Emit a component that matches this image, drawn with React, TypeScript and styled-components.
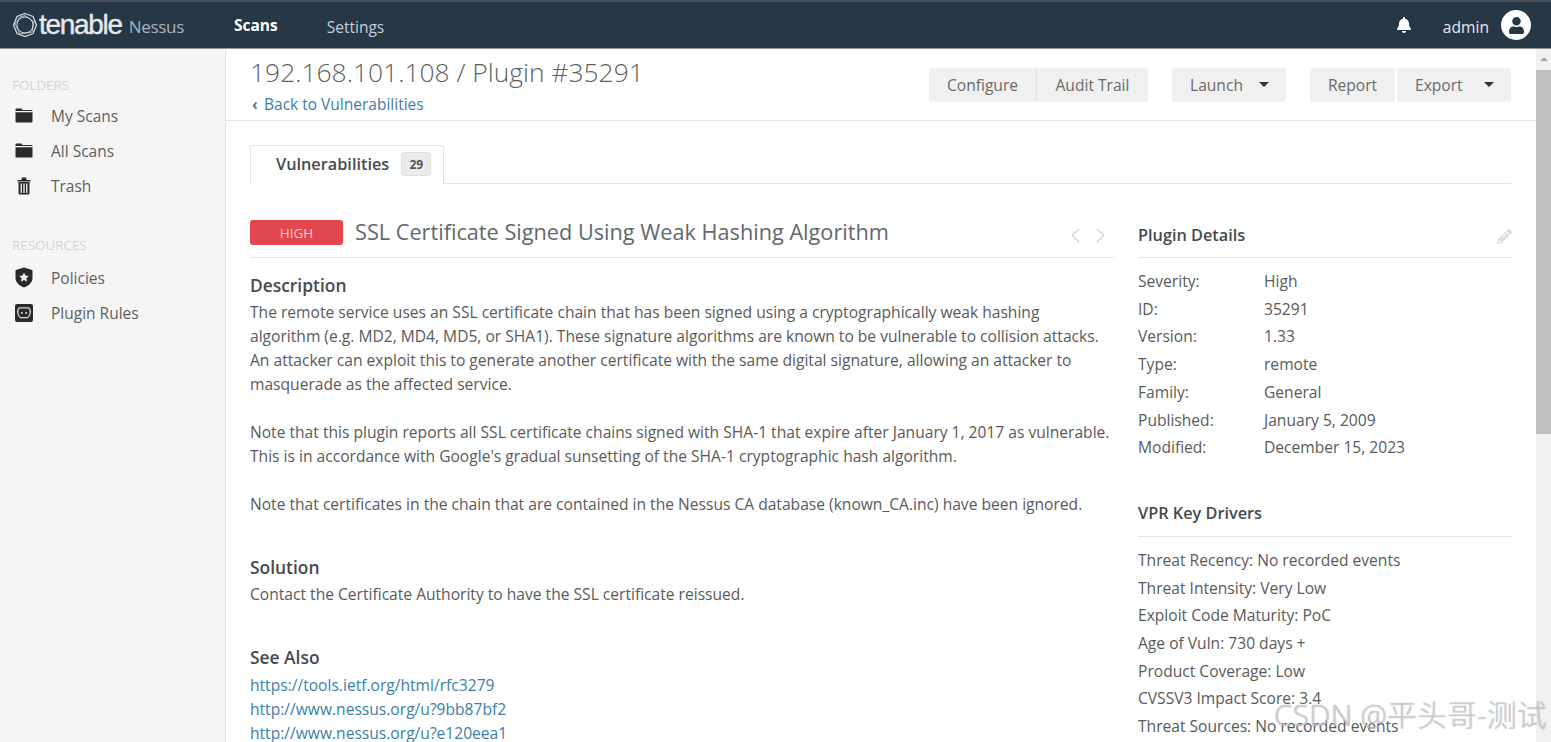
import styled, { createGlobalStyle } from 'styled-components';
import { FaBell, FaPencilAlt, FaUser } from 'react-icons/fa';
import { ChevronLeft, ChevronRight } from 'lucide-react';

const GlobalStyle = createGlobalStyle`
  html, body {
    margin: 0;
    height: 100%;
    overflow: hidden;
    background: #fff;
    font-family: "Open Sans", "Noto Sans", sans-serif;
    color: #575757;
  }
  * { box-sizing: border-box; }
`;

const details = [
  ['Severity:', 'High'],
  ['ID:', '35291'],
  ['Version:', '1.33'],
  ['Type:', 'remote'],
  ['Family:', 'General'],
  ['Published:', 'January 5, 2009'],
  ['Modified:', 'December 15, 2023'],
];

const drivers = [
  'Threat Recency: No recorded events',
  'Threat Intensity: Very Low',
  'Exploit Code Maturity: PoC',
  'Age of Vuln: 730 days +',
  'Product Coverage: Low',
  'CVSSV3 Impact Score: 3.4',
  'Threat Sources: No recorded events',
];

const FolderIcon = () => (
  <svg width="18" height="15" viewBox="0 0 18 15">
    <path d="M0.5 3 V1.5 C0.5 0.9 0.9 0.5 1.5 0.5 H6 C6.6 0.5 7 0.9 7.2 1.5 L7.5 2 H16.5 C17.1 2 17.5 2.4 17.5 3 Z" fill="#2b2b2e" />
    <path d="M0.5 4.2 H17.5 V13.5 C17.5 14.1 17.1 14.5 16.5 14.5 H1.5 C0.9 14.5 0.5 14.1 0.5 13.5 Z" fill="#2b2b2e" />
  </svg>
);

const TrashIcon = () => (
  <svg width="14" height="18" viewBox="0 0 14 18">
    <path d="M0.5 3 H4.5 V1.6 C4.5 1 5 0.5 5.6 0.5 H8.4 C9 0.5 9.5 1 9.5 1.6 V3 H13.5 V4.4 H0.5 Z" fill="#2b2b2e" />
    <path d="M1.5 5 H12.5 V16.3 C12.5 17 12 17.5 11.3 17.5 H2.7 C2 17.5 1.5 17 1.5 16.3 Z" fill="#2b2b2e" />
    <rect x="3.6" y="6.5" width="1.3" height="9.5" fill="#f5f5f5" />
    <rect x="6.35" y="6.5" width="1.3" height="9.5" fill="#f5f5f5" />
    <rect x="9.1" y="6.5" width="1.3" height="9.5" fill="#f5f5f5" />
  </svg>
);

const App = () => {
  return (
    <>
      <GlobalStyle />
      <Page>
        <TopBar>
          <Brand>
            <svg width="26" height="26" viewBox="0 0 26 26" fill="none" stroke="#d5dadd" strokeWidth="1.3">
              <path d="M13 1.5 L21 4.5 L24.5 13 L21 21.5 L13 24.5 L5 21.5 L1.5 13 L5 4.5 Z" />
              <path d="M13 3.5 L22 10 L20 20 L8 22 L3 12 L8 5 Z" strokeWidth="0.8" />
              <circle cx="13" cy="13" r="8" strokeWidth="1" />
            </svg>
            <BrandName>tenable</BrandName>
            <BrandProduct>Nessus</BrandProduct>
          </Brand>
          <TopLink $active>Scans</TopLink>
          <TopLink>Settings</TopLink>
          <TopRight>
            <FaBell size={16} color="#fff" />
            <AdminName>admin</AdminName>
            <AvatarCircle>
              <FaUser size={17} color="#263746" />
            </AvatarCircle>
          </TopRight>
        </TopBar>

        <Body>
          <Sidebar>
            <SideHeading>FOLDERS</SideHeading>
            <SideItem><SideIcon><FolderIcon /></SideIcon>My Scans</SideItem>
            <SideItem><SideIcon><FolderIcon /></SideIcon>All Scans</SideItem>
            <SideItem><SideIcon $nudge={2}><TrashIcon /></SideIcon>Trash</SideItem>
            <SideHeading $second>RESOURCES</SideHeading>
            <SideItem>
              <SideIcon>
                <svg width="18" height="21" viewBox="0 0 18 21">
                  <path d="M9 0.5 L17 3 C17.4 3.2 17.5 3.4 17.5 3.8 V11 C17.5 15.5 13.5 19 9 20.5 C4.5 19 0.5 15.5 0.5 11 V3.8 C0.5 3.4 0.6 3.2 1 3 Z" fill="#2b2b2e" />
                  <path d="M9 5.5 L10.5 8.6 L13.8 9 L11.4 11.3 L12 14.6 L9 13 L6 14.6 L6.6 11.3 L4.2 9 L7.5 8.6 Z" fill="#f5f5f5" />
                </svg>
              </SideIcon>
              Policies
            </SideItem>
            <SideItem>
              <SideIcon>
                <svg width="18" height="18" viewBox="0 0 18 18">
                  <rect x="0" y="0" width="18" height="18" rx="2" fill="#2b2b2e" />
                  <path d="M4.5 3.8 H13.5 C15 5 15.6 7 15.2 9 C14.9 11 13.8 12.8 12.5 13.6 H5.5 C4.2 12.8 3.1 11 2.8 9 C2.4 7 3 5 4.5 3.8 Z" fill="none" stroke="#cfcfcf" strokeWidth="1.3" />
                  <circle cx="6.8" cy="9" r="1.1" fill="#cfcfcf" />
                  <circle cx="11.2" cy="9" r="1.1" fill="#cfcfcf" />
                </svg>
              </SideIcon>
              Plugin Rules
            </SideItem>
          </Sidebar>

          <Main>
            <TitleBar>
              <TitleBlock>
                <PageTitle>192.168.101.108 / Plugin #35291</PageTitle>
                <BackLink><BackChevron>‹</BackChevron>Back to Vulnerabilities</BackLink>
              </TitleBlock>
              <Actions>
                <ButtonGroup>
                  <ActionButton $width={108} $divider>Configure</ActionButton>
                  <ActionButton $width={111}>Audit Trail</ActionButton>
                </ButtonGroup>
                <ActionButton $width={114} $caret>Launch<Caret /></ActionButton>
                <ButtonGroup>
                  <ActionButton $width={85}>Report</ActionButton>
                  <ActionButton $width={114} $caret $gapLeft>Export<Caret /></ActionButton>
                </ButtonGroup>
              </Actions>
            </TitleBar>

            <Content>
              <TabRow>
                <Tab>
                  Vulnerabilities
                  <TabCount>29</TabCount>
                </Tab>
              </TabRow>

              <Columns>
                <LeftColumn>
                  <PluginHeader>
                    <SeverityBadge>HIGH</SeverityBadge>
                    <PluginTitle>SSL Certificate Signed Using Weak Hashing Algorithm</PluginTitle>
                    <Pager>
                      <ChevronLeft size={25} strokeWidth={1.3} />
                      <ChevronRight size={25} strokeWidth={1.3} />
                    </Pager>
                  </PluginHeader>

                  <SectionTitle>Description</SectionTitle>
                  <Paragraph>
                    The remote service uses an SSL certificate chain that has been signed using a cryptographically weak hashing<br />
                    algorithm (e.g. MD2, MD4, MD5, or SHA1). These signature algorithms are known to be vulnerable to collision attacks.<br />
                    An attacker can exploit this to generate another certificate with the same digital signature, allowing an attacker to<br />
                    masquerade as the affected service.
                  </Paragraph>
                  <Paragraph>
                    Note that this plugin reports all SSL certificate chains signed with SHA-1 that expire after January 1, 2017 as vulnerable.<br />
                    This is in accordance with Google's gradual sunsetting of the SHA-1 cryptographic hash algorithm.
                  </Paragraph>
                  <Paragraph>
                    Note that certificates in the chain that are contained in the Nessus CA database (known_CA.inc) have been ignored.
                  </Paragraph>

                  <SectionTitle $spaced>Solution</SectionTitle>
                  <Paragraph>Contact the Certificate Authority to have the SSL certificate reissued.</Paragraph>

                  <SectionTitle $spaced>See Also</SectionTitle>
                  <LinkList>
                    <LinkLine>https://tools.ietf.org/html/rfc3279</LinkLine>
                    <LinkLine>http://www.nessus.org/u?9bb87bf2</LinkLine>
                    <LinkLine>http://www.nessus.org/u?e120eea1</LinkLine>
                  </LinkList>
                </LeftColumn>

                <RightColumn>
                  <PanelHeader>
                    Plugin Details
                    <PencilSlot><FaPencilAlt size={15} color="#dcdcdc" /></PencilSlot>
                  </PanelHeader>
                  <DetailList>
                    {details.map(([label, value]) => (
                      <DetailRow key={label}>
                        <DetailLabel>{label}</DetailLabel>
                        <span>{value}</span>
                      </DetailRow>
                    ))}
                  </DetailList>
                  <PanelHeader $spaced>VPR Key Drivers</PanelHeader>
                  <DetailList>
                    {drivers.map((line) => (
                      <DetailRow key={line}>{line}</DetailRow>
                    ))}
                  </DetailList>
                </RightColumn>
              </Columns>
            </Content>
          </Main>

          <Scrollbar>
            <ScrollArrow />
            <ScrollThumb />
          </Scrollbar>
        </Body>
        <Watermark>CSDN @平头哥-测试</Watermark>
      </Page>
    </>
  );
};

export default App;

const Page = styled.div`
  position: relative;
  width: 1551px;
  height: 742px;
  overflow: hidden;
  display: flex;
  flex-direction: column;
`;

const TopBar = styled.header`
  height: 49px;
  flex: none;
  display: flex;
  align-items: center;
  background: #263746;
  border-top: 2px solid #4a4f54;
  border-bottom: 1px solid #8b959c;
  color: #fff;
  padding-left: 12px;
`;

const Brand = styled.div`
  width: 222px;
  display: flex;
  align-items: center;
  flex: none;
`;

const BrandName = styled.span`
  font-family: "Liberation Sans", Arial, sans-serif;
  font-size: 28px;
  letter-spacing: -1.3px;
  color: #e6e9eb;
  -webkit-text-stroke: 0.4px #e6e9eb;
  margin-left: 1px;
`;

const BrandProduct = styled.span`
  font-size: 17px;
  letter-spacing: -0.3px;
  color: #aab3ba;
  margin-left: 7px;
  margin-top: 3px;
`;

const TopLink = styled.a<{ $active?: boolean }>`
  font-size: 15.5px;
  font-weight: ${(props) => (props.$active ? 700 : 400)};
  color: ${(props) => (props.$active ? '#fff' : '#c8ced3')};
  margin-right: 49px;
  margin-top: ${(props) => (props.$active ? '0' : '3px')};
`;

const TopRight = styled.div`
  margin-left: auto;
  display: flex;
  align-items: center;
  padding-right: 20px;
`;

const AdminName = styled.span`
  font-size: 15.6px;
  color: #e6e9eb;
  margin: 3px 12px 0 31px;
`;

const AvatarCircle = styled.span`
  width: 30px;
  height: 30px;
  border-radius: 50%;
  background: #fff;
  display: flex;
  align-items: center;
  justify-content: center;
`;

const Body = styled.div`
  flex: 1;
  min-height: 0;
  display: flex;
`;

const Sidebar = styled.nav`
  width: 226px;
  flex: none;
  background: #f5f5f5;
  border-right: 1px solid #e4e4e4;
  padding-top: 28px;
`;

const SideHeading = styled.div<{ $second?: boolean }>`
  font-size: 13.4px;
  line-height: 16px;
  color: #d4d4d4;
  padding-left: 12px;
  margin-top: ${(props) => (props.$second ? '34px' : '0')};
  margin-bottom: ${(props) => (props.$second ? '7px' : '5px')};
`;

const SideItem = styled.div`
  height: 35px;
  display: flex;
  align-items: center;
  font-size: 15.5px;
  color: #5f5f5f;
`;

const SideIcon = styled.span<{ $nudge?: number }>`
  width: 51px;
  padding-left: ${(props) => 15 + (props.$nudge || 0)}px;
  flex: none;
  display: flex;
  align-items: center;
`;

const Main = styled.main`
  flex: 1;
  min-width: 0;
  display: flex;
  flex-direction: column;
`;

const TitleBar = styled.div`
  height: 72px;
  flex: none;
  display: flex;
  justify-content: space-between;
  padding: 6px 25px 0 24px;
  border-bottom: 1px solid #e6e6e6;
`;

const TitleBlock = styled.div`
  display: flex;
  flex-direction: column;
`;

const PageTitle = styled.h1`
  margin: 0;
  font-size: 26.4px;
  line-height: 34px;
  font-weight: 300;
  color: #5f5f5f;
`;

const BackLink = styled.a`
  display: flex;
  font-size: 15.5px;
  line-height: 24px;
  color: #3d7ea6;
  margin-top: 3px;
`;

const BackChevron = styled.span`
  width: 14px;
  padding-left: 2px;
  font-weight: 700;
`;

const Actions = styled.div`
  display: flex;
  gap: 24px;
  padding-top: 13px;
  align-items: flex-start;
`;

const ButtonGroup = styled.div`
  display: flex;
`;

const ActionButton = styled.div<{ $width: number; $divider?: boolean; $caret?: boolean; $gapLeft?: boolean }>`
  width: ${(props) => props.$width}px;
  height: 34px;
  display: flex;
  align-items: center;
  justify-content: ${(props) => (props.$caret ? 'space-between' : 'center')};
  padding: ${(props) => (props.$caret ? '0 17px 0 18px' : '0')};
  background: #f0f0f0;
  border-radius: 3px;
  font-size: 15.6px;
  color: #6b6b6b;
  border-right: ${(props) => (props.$divider ? '1px solid #dedede' : 'none')};
  margin-left: ${(props) => (props.$gapLeft ? '2px' : '0')};
`;

const Caret = styled.span`
  width: 0;
  height: 0;
  border-left: 5px solid transparent;
  border-right: 5px solid transparent;
  border-top: 5px solid #333;
  margin-bottom: 2px;
`;

const Content = styled.div`
  padding: 24px 25px 0 24px;
`;

const TabRow = styled.div`
  height: 39px;
  display: flex;
  border-bottom: 1px solid #e4e4e4;
`;

const Tab = styled.div`
  width: 194px;
  height: 39px;
  display: flex;
  align-items: center;
  padding: 0 0 2px 25px;
  background: #fff;
  border: 1px solid #e4e4e4;
  border-bottom: none;
  border-radius: 3px 3px 0 0;
  font-size: 16.3px;
  font-weight: 600;
  color: #454a4f;
`;

const TabCount = styled.span`
  width: 30px;
  height: 24px;
  margin-left: 12px;
  display: flex;
  align-items: center;
  justify-content: center;
  background: #ececec;
  border: 1px solid #e0e0e0;
  border-radius: 3px;
  font-size: 12px;
  font-weight: 700;
  color: #555;
`;

const Columns = styled.div`
  display: flex;
  justify-content: space-between;
  padding-top: 26px;
`;

const LeftColumn = styled.div`
  width: 865px;
`;

const PluginHeader = styled.div`
  height: 48px;
  display: flex;
  align-items: flex-start;
  border-bottom: 1px solid #e6e6e6;
`;

const SeverityBadge = styled.div`
  width: 93px;
  height: 25px;
  margin-top: 10px;
  display: flex;
  align-items: center;
  justify-content: center;
  background: #e2474f;
  border-radius: 3px;
  font-size: 13.5px;
  color: #f6d4d6;
`;

const PluginTitle = styled.h2`
  margin: 4px 0 0 12px;
  font-size: 21.7px;
  line-height: 36px;
  font-weight: 400;
  color: #62686d;
`;

const Pager = styled.div`
  margin-left: auto;
  margin-top: 13px;
  padding-right: 2px;
  display: flex;
  color: #d2d2d2;
`;

const SectionTitle = styled.h3<{ $spaced?: boolean }>`
  margin: ${(props) => (props.$spaced ? '39px' : '15px')} 0 0;
  font-size: 17.4px;
  line-height: 24px;
  font-weight: 600;
  color: #454a4f;
`;

const Paragraph = styled.p`
  margin: 3px 0 24px;
  font-size: 15.6px;
  line-height: 24px;
  color: #5a5a5a;
  white-space: nowrap;
`;

const LinkList = styled.div`
  padding-top: 4px;
`;

const LinkLine = styled.div`
  font-size: 15.6px;
  line-height: 24px;
  color: #3d7ea6;
`;

const RightColumn = styled.div`
  width: 373px;
`;

const PanelHeader = styled.div<{ $spaced?: boolean }>`
  height: ${(props) => (props.$spaced ? '36px' : '48px')};
  display: flex;
  justify-content: space-between;
  align-items: flex-end;
  padding-bottom: ${(props) => (props.$spaced ? '12px' : '11px')};
  margin-top: ${(props) => (props.$spaced ? '39px' : '0')};
  border-bottom: 1px solid #e6e6e6;
  font-size: 16.3px;
  line-height: 22px;
  font-weight: 600;
  color: #454a4f;
`;

const PencilSlot = styled.span`
  display: flex;
  margin: 0 -1px 2px 0;
`;

const DetailList = styled.div`
  padding-top: 10px;
`;

const DetailRow = styled.div`
  display: flex;
  font-size: 15.6px;
  line-height: 27.7px;
  color: #5a5a5a;
  white-space: nowrap;
`;

const DetailLabel = styled.span`
  width: 126px;
  flex: none;
`;

const Scrollbar = styled.div`
  width: 15px;
  flex: none;
  background: #f1f1f1;
  display: flex;
  flex-direction: column;
  align-items: center;
  padding-top: 8px;
`;

const ScrollArrow = styled.span`
  width: 0;
  height: 0;
  border-left: 4px solid transparent;
  border-right: 4px solid transparent;
  border-bottom: 4px solid #a8a8a8;
`;

const ScrollThumb = styled.div`
  width: 100%;
  height: 364px;
  margin-top: 9px;
  background: #c1c1c1;
`;

const Watermark = styled.div`
  position: absolute;
  right: 4px;
  bottom: 9px;
  font-family: "Noto Sans", "Noto Sans CJK SC", sans-serif;
  font-size: 29.8px;
  line-height: 36px;
  font-weight: 300;
  color: rgba(255, 255, 255, 0.55);
  text-shadow: 0 0 1px rgba(90, 90, 90, 0.75);
  letter-spacing: 0.2px;
`;
